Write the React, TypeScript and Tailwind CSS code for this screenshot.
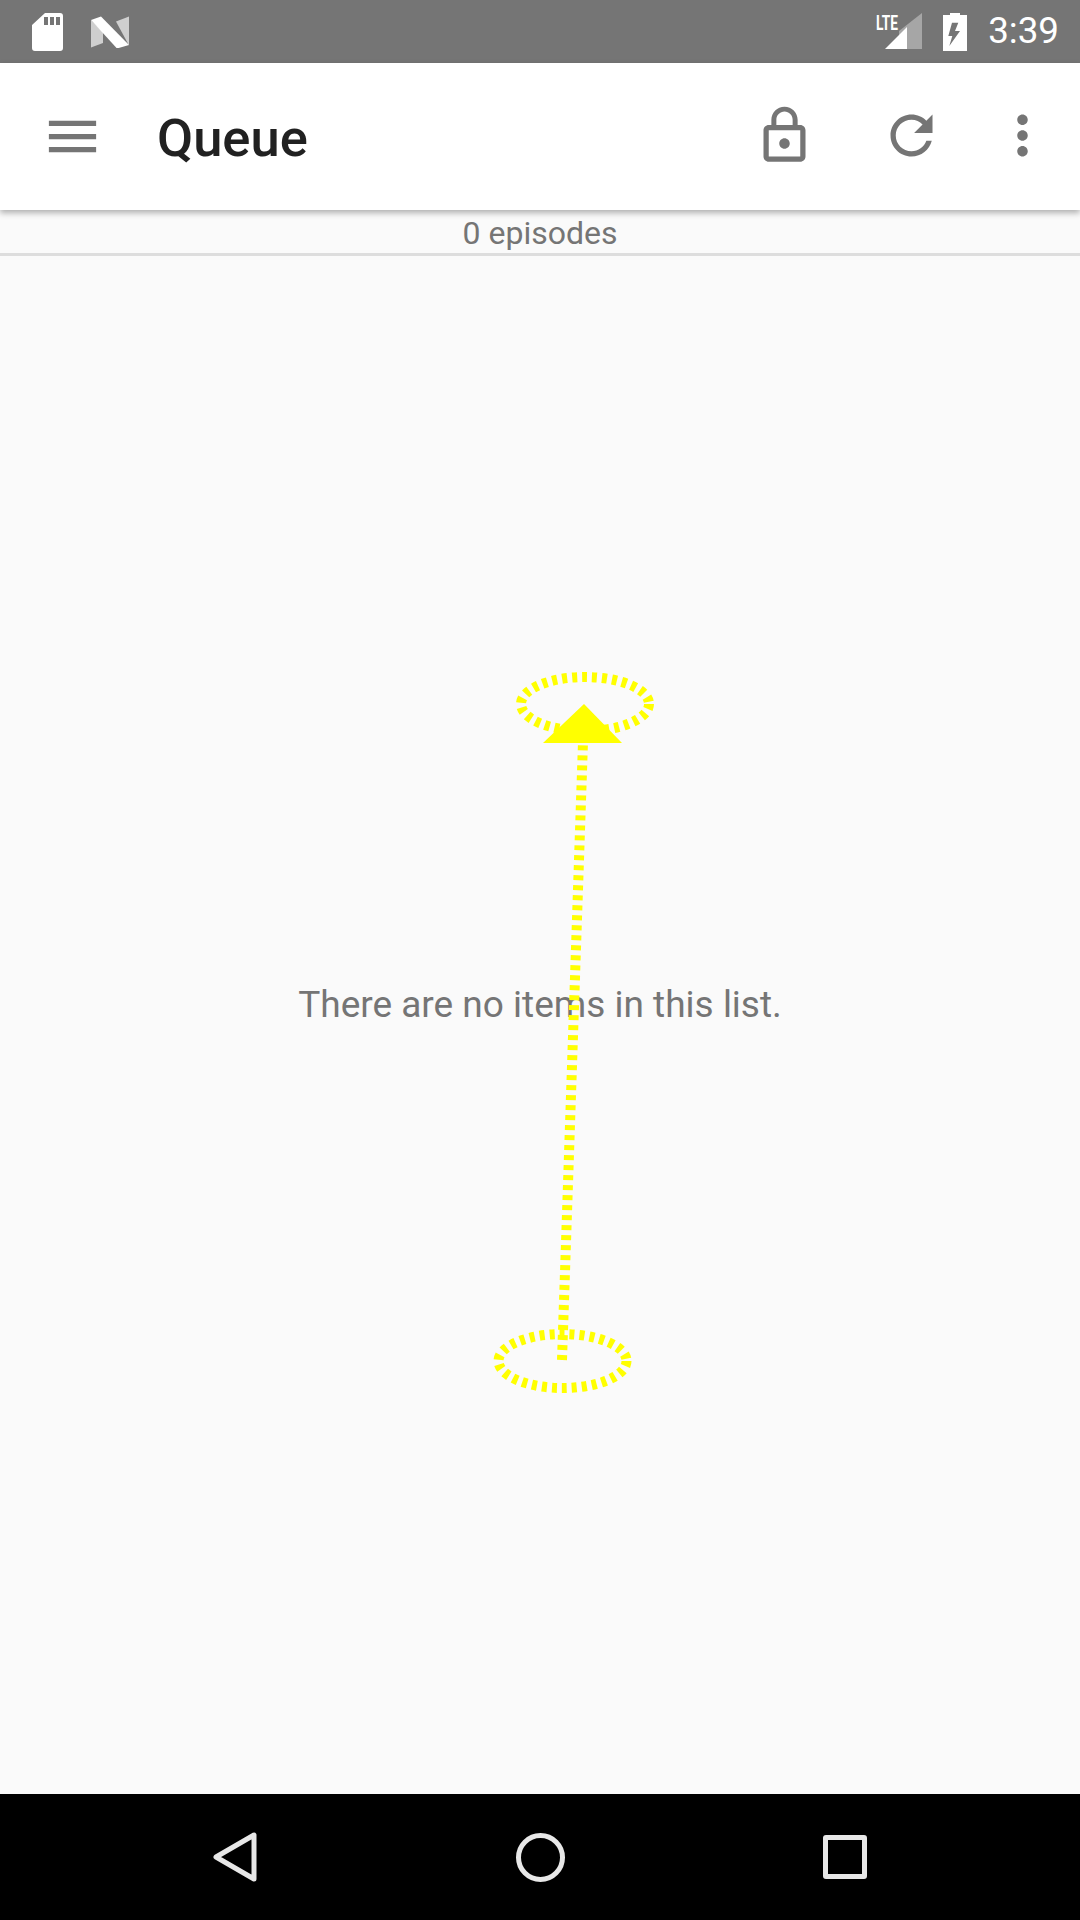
const FONT = "font-['Roboto','Noto_Sans',sans-serif]";

const Icon = ({ d, className }: { d: string; className?: string }) => (
  <svg viewBox="0 0 24 24" className={"w-[63px] h-[63px] fill-[#757575] " + (className ?? "")}>
    <path d={d} />
  </svg>
);

const StatusBar = () => (
  <div className="h-[63px] bg-[#757575] flex items-center shrink-0">
    {/* sd card */}
    <svg viewBox="0 0 31 39" className="w-[31px] h-[39px] ml-[32px]">
      <path
        fill="#fff"
        fillRule="evenodd"
        d="M13 1h15a3 3 0 0 1 3 3v32a3 3 0 0 1-3 3H3a3 3 0 0 1-3-3V13zM12 5v8h4V5zM18 5v8h4V5zM24 5v8h4V5z"
      />
    </svg>
    {/* android n */}
    <svg viewBox="0 0 39 32" className="w-[39px] h-[32px] ml-[28px]">
      <path fill="#cfcfcf" d="M0 4l12 12v11L0 31.500z" />
      <path fill="#cfcfcf" d="M25 5.500L38 0.500v29z" />
      <path fill="#fff" d="M0 4L10 0.500 38 29l-12 3.500z" />
    </svg>
    <div className="flex-1" />
    <div className="relative w-[46px] h-[38px] mr-[21px]">
      <svg viewBox="0 0 46 38" className="w-[46px] h-[38px]">
        <path fill="#a6a6a6" d="M23 18L46 0v36H23z" />
        <path fill="#fff" d="M9 36L31 14v22z" />
      </svg>
      <span className="absolute left-[-9px] top-[-2px] w-[40px] text-center scale-x-[0.65] text-[21px] leading-[24px] font-bold text-white font-['Roboto',sans-serif]">
        LTE
      </span>
    </div>
    {/* battery */}
    <svg viewBox="0 0 24 38" className="w-[24px] h-[38px] mr-[21px]">
      <path
        fill="#fff"
        fillRule="evenodd"
        d="M7 2V0h10v2h7v36H0V2zM9 9.700h6.300L12 18h5L6.300 33 9.300 23H5.300z"
      />
    </svg>
    <span className={"text-[36.750px] leading-none text-white mr-[21px] " + FONT}>3:39</span>
  </div>
);

const Toolbar = () => (
  <div className="relative z-10 h-[147px] bg-white flex items-center shrink-0 shadow-[0_3px_6px_rgba(0,0,0,0.3)]">
    <Icon className="ml-[41px]" d="M3 18h18v-2H3v2zm0-5h18v-2H3v2zm0-7v2h18V6H3z" />
    <span className={"ml-[53px] mt-[3px] text-[52.500px] leading-none font-medium text-[#212121] " + FONT}>Queue</span>
    <div className="flex-1" />
    <Icon
      className="mb-[3px]"
      d="M12 17c1.100 0 2-.9 2-2s-.9-2-2-2-2 .9-2 2 .9 2 2 2zm6-9h-1V6c0-2.760-2.240-5-5-5S7 3.240 7 6v2H6c-1.100 0-2 .9-2 2v10c0 1.100.9 2 2 2h12c1.100 0 2-.9 2-2V10c0-1.100-.9-2-2-2zM8.900 6c0-1.710 1.390-3.100 3.100-3.100s3.100 1.390 3.100 3.100v2H8.900V6zM18 20H6V10h12v10z"
    />
    <Icon
      className="ml-[64px] mb-[3px]"
      d="M17.650 6.350C16.200 4.900 14.210 4 12 4c-4.420 0-7.990 3.580-7.990 8s3.570 8 7.990 8c3.730 0 6.840-2.550 7.730-6h-2.080c-.82 2.330-3.040 4-5.650 4-3.310 0-6-2.690-6-6s2.690-6 6-6c1.660 0 3.140.69 4.220 1.780L13 11h7V4l-2.350 2.350z"
    />
    <Icon
      className="ml-[48px] mr-[26px] mb-[3px]"
      d="M12 8c1.100 0 2-.9 2-2s-.9-2-2-2-2 .9-2 2 .9 2 2 2zm0 2c-1.100 0-2 .9-2 2s.9 2 2 2 2-.9 2-2-.9-2-2-2zm0 6c-1.100 0-2 .9-2 2s.9 2 2 2 2-.9 2-2-.9-2-2-2z"
    />
  </div>
);

const NavBar = () => (
  <div className="h-[126px] bg-black flex items-center justify-center shrink-0">
    <div className="w-[305px] flex justify-center">
      <svg viewBox="0 0 46 52" className="w-[46px] h-[52px]">
        <path d="M42 4v44L4 26z" fill="none" stroke="#e8e8e8" strokeWidth="5" strokeLinejoin="round" />
      </svg>
    </div>
    <div className="w-[305px] flex justify-center">
      <div className="w-[49px] h-[49px] rounded-full border-[5px] border-[#e8e8e8]" />
    </div>
    <div className="w-[305px] flex justify-center">
      <div className="w-[44px] h-[44px] rounded-[3px] border-[5px] border-[#e8e8e8]" />
    </div>
  </div>
);

// the yellow swipe gesture drawn on top of the screen
const Gesture = () => (
  <svg viewBox="0 0 1080 1920" className="absolute inset-0 w-[1080px] h-[1920px] pointer-events-none z-20">
    <ellipse cx="585" cy="704" rx="64" ry="27" fill="none" stroke="#ffff00" strokeWidth="10" strokeDasharray="5 5" />
    <ellipse cx="562.500" cy="1361" rx="64" ry="27" fill="none" stroke="#ffff00" strokeWidth="10" strokeDasharray="5 5" />
    <line x1="562" y1="1360" x2="583" y2="742" stroke="#ffff00" strokeWidth="10" strokeDasharray="5 5" />
    <path d="M584 704L622 743H543z" fill="#ffff00" />
  </svg>
);

export default function App() {
  return (
    <div className="relative w-[1080px] h-[1920px] flex flex-col bg-[#fafafa] overflow-hidden">
      <StatusBar />
      <Toolbar />
      <div className="h-[46px] shrink-0 border-b-[3px] border-[#dddddd] flex items-center justify-center">
        <span className={"text-[32px] leading-none text-[#757575] mt-[3px] " + FONT}>0 episodes</span>
      </div>
      <div className="flex-1 flex items-center justify-center pb-[42px]">
        <span className={"text-[37px] leading-none text-[#757575] " + FONT}>There are no items in this list.</span>
      </div>
      <NavBar />
      <Gesture />
    </div>
  );
}
